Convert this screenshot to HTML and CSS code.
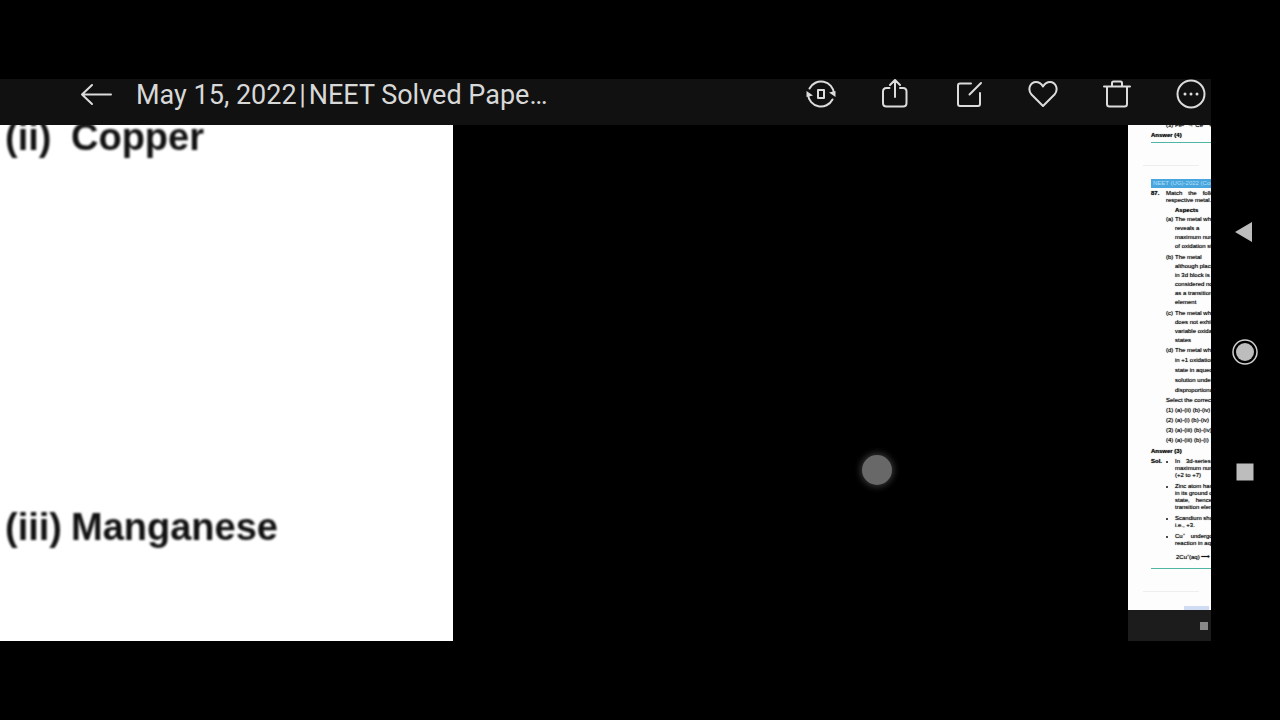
FILE: index.html
```
<!doctype html>
<html lang="en">
<head>
    <meta charset="utf-8">
    <title>May 15, 2022 | NEET Solved Paper</title>
    <link rel="stylesheet" href="styles.css">
</head>
<body>
    <main class="app">
        <header class="toolbar">
            <button class="icon-btn back" aria-label="Back">
                <svg width="32" height="30" viewBox="0 0 32 30"><path d="M12 6L2 15.500L12 25M2 15.500H31"/></svg>
            </button>
            <h1 class="title">May 15, 2022&#8202;|&#8202;NEET Solved Pape…</h1>
            <div class="actions">
                <button class="icon-btn" aria-label="Rotate">
                    <svg width="30" height="30" viewBox="0 0 30 30">
                        <path d="M3.500 9.500A13 13 0 0 1 28 14.500M26.500 20.500A13 13 0 0 1 2 15.500"/>
                        <path class="solid" d="M23 13.500L29.500 12V18zM7 16.500L.5 18V12z"/>
                        <rect x="12" y="11" width="6" height="8"/>
                    </svg>
                </button>
                <button class="icon-btn" aria-label="Share">
                    <svg width="30" height="30" viewBox="0 0 30 30"><path d="M9.500 9H6.500Q3 9 3 12.500V24Q3 27.500 6.500 27.500H23Q26.500 27.500 26.500 24V12.500Q26.500 9 23 9H20M15 18V1.500M10 6L15 1L20 6"/></svg>
                </button>
                <button class="icon-btn" aria-label="Edit">
                    <svg width="30" height="30" viewBox="0 0 30 30"><path d="M17 4.500H6Q4 4.500 4 6.500V25Q4 27 6 27H24Q26 27 26 25V14M15.500 15.500L27 4"/></svg>
                </button>
                <button class="icon-btn" aria-label="Favourite">
                    <svg width="30" height="30" viewBox="0 0 30 30"><path d="M15 27L3.500 15.500C-1 10 2.500 3 8 3C11.500 3 13.500 5 15 7.500C16.500 5 18.500 3 22 3C27.500 3 31 10 26.500 15.500Z"/></svg>
                </button>
                <button class="icon-btn" aria-label="Delete">
                    <svg width="30" height="30" viewBox="0 0 30 30"><path d="M2 7.500H28M10 7V4Q10 2.500 11.500 2.500H18.500Q20 2.500 20 4V7M5 8V25Q5 27.500 7.500 27.500H22.500Q25 27.500 25 25V8"/></svg>
                </button>
                <button class="icon-btn" aria-label="More">
                    <svg width="30" height="30" viewBox="0 0 30 30">
                        <circle cx="15" cy="15" r="13.500"/>
                        <path class="dots" d="M9 15h.01M15 15h.01M21 15h.01"/>
                    </svg>
                </button>
            </div>
        </header>

        <div class="viewer">
            <!-- zoomed page -->
            <section class="page">
                <dl class="metals">
                    <dt>(ii)</dt><dd>Copper</dd>
                    <dt>(iii)</dt><dd>Manganese</dd>
                </dl>
            </section>

            <!-- full page preview -->
            <aside class="side">
                <div class="sheet">
                    <p class="prev">(3) Fe²⁺ → Ce⁴⁺ + e⁻</p>
                    <p class="answer">Answer (4)</p>
                    <hr class="rule">
                    <hr class="fold">
                    <div class="banner">NEET (UG)-2022 (Code-Q1)</div>
                    <div class="row">
                        <b>87.</b>
                        <div>
                            <p class="wide"><span>Match</span><span>the</span><span>following</span></p>
                            <p>respective metal.</p>
                        </div>
                    </div>
                    <h2 class="aspects">Aspects</h2>
                    <ol class="list">
                        <li><span>(a)</span><p>The metal which<br>reveals a<br>maximum number<br>of oxidation states</p></li>
                        <li><span>(b)</span><p>The metal<br>although placed<br>in 3d block is<br>considered not<br>as a transition<br>element</p></li>
                        <li><span>(c)</span><p>The metal which<br>does not exhibit<br>variable oxidation<br>states</p></li>
                        <li class="loose"><span>(d)</span><p>The metal which<br>in +1 oxidation<br>state in aqueous<br>solution undergoes<br>disproportionation</p></li>
                    </ol>
                    <div class="options">
                        <p>Select the correct option</p>
                        <p>(1) (a)-(ii) (b)-(iv)</p>
                        <p>(2) (a)-(i) (b)-(iv)</p>
                        <p>(3) (a)-(iii) (b)-(iv)</p>
                        <p>(4) (a)-(iii) (b)-(i)</p>
                    </div>
                    <p class="answer">Answer (3)</p>
                    <div class="sol">
                        <b>Sol.</b>
                        <ul>
                            <li><p class="wide"><span>In</span><span>3d-series</span></p><p>maximum number</p><p>(+2 to +7)</p></li>
                            <li><p>Zinc atom has</p><p>in its ground or</p><p class="wide"><span>state,</span><span>hence</span></p><p>transition element</p></li>
                            <li><p>Scandium shows</p><p>i.e., +3.</p></li>
                            <li><p class="wide"><span>Cu⁺</span><span>undergoes</span></p><p>reaction in aqueous</p></li>
                        </ul>
                    </div>
                    <p class="equation">2Cu⁺(aq) ⟶</p>
                    <hr class="rule">
                    <hr class="fold">
                    <div class="link-bar"></div>
                </div>
                <div class="side-foot"><i></i></div>
            </aside>
            <span class="touch"></span>
        </div>
    </main>

    <nav class="sysnav">
        <button aria-label="System back"><svg width="26" height="26" viewBox="0 0 26 26"><path d="M3 13L20 3V23z"/></svg></button>
        <button aria-label="Home"><svg width="26" height="26" viewBox="0 0 26 26"><circle cx="13" cy="13" r="9"/><circle class="ring" cx="13" cy="13" r="12"/></svg></button>
        <button aria-label="Recent apps"><svg width="26" height="26" viewBox="0 0 26 26"><rect x="4.500" y="4.500" width="17" height="17"/></svg></button>
    </nav>
</body>
</html>
```
FILE: styles.css
```
* {
    margin: 0;
    padding: 0;
    box-sizing: border-box;
}

body {
    display: flex;
    height: 100vh;
    background: #000;
    overflow: hidden;
    font-family: "Liberation Sans", Arial, sans-serif;
}

button {
    border: 0;
    background: none;
    cursor: pointer;
}

ul, ol {
    list-style: none;
}

.app {
    flex: 1;
    min-width: 0;
    display: flex;
    flex-direction: column;
    padding: 79px 0;
}

/* toolbar */
.toolbar {
    display: flex;
    align-items: center;
    height: 46px;
    padding: 0 5px 16px 80px;
    background: #111;
    color: #d8d8d8;
}

.title {
    margin-left: 24px;
    font: 400 27px/32px Roboto, sans-serif;
    padding-top: 2px;
    white-space: nowrap;
}

.actions {
    display: flex;
    gap: 44px;
    margin-left: auto;
}

.icon-btn svg {
    display: block;
    fill: none;
    stroke: #dcdcdc;
    stroke-width: 2;
    stroke-linecap: round;
    stroke-linejoin: round;
}

.icon-btn .solid {
    fill: #dcdcdc;
    stroke: none;
}

.icon-btn .dots {
    stroke-width: 3;
}

/* viewer */
.viewer {
    position: relative;
    flex: 1;
    min-height: 0;
    display: grid;
    grid-template-columns: 453px 1fr 83px;
    overflow: hidden;
}

.page {
    background: #fff;
    overflow: hidden;
}

.metals {
    display: grid;
    grid-template-columns: 66px 1fr;
    row-gap: 350px;
    margin-top: -8px;
    padding-left: 5px;
    font-size: 38px;
    font-weight: bold;
    line-height: 40px;
    color: #111;
    filter: blur(1px);
}

.side {
    grid-column: 3;
    display: flex;
    flex-direction: column;
    min-height: 0;
    overflow: hidden;
    background: #1c1c1c;
}

.sheet {
    height: 485px;
    padding-left: 23px;
    overflow: hidden;
    background: #fdfdfd;
    color: #111;
    font-size: 6px;
    line-height: 7px;
    white-space: nowrap;
    text-shadow: 0 0 1px #333;
}

.prev {
    margin-top: -3px;
    padding-left: 15px;
}

.answer {
    font-weight: bold;
    line-height: 10px;
    padding-top: 1px;
}

.rule {
    height: 1px;
    border: 0;
    margin-top: 2px;
    background: #4fb5a5;
}

.fold {
    height: 1px;
    border: 0;
    margin: 22px 12px 0 -8px;
    background: #eee;
}

.banner {
    height: 9px;
    margin: 13px 0 2px;
    padding-left: 2px;
    overflow: hidden;
    background: #48a5dd;
    color: #b5e0fa;
    line-height: 9px;
    text-shadow: none;
}

.row {
    display: grid;
    grid-template-columns: 15px 1fr;
}

.wide {
    display: flex;
    gap: 6px;
}

.aspects {
    padding: 1px 0 0 24px;
    font-size: 6px;
    line-height: 10px;
}

.list {
    padding-left: 15px;
    line-height: 9px;
}

.list li {
    display: grid;
    grid-template-columns: 9px 1fr;
    padding-bottom: 2px;
}

.list .loose {
    margin-top: -2px;
    padding-bottom: 0;
    line-height: 10px;
}

.options {
    padding-left: 15px;
    line-height: 10px;
}

.sol {
    display: grid;
    grid-template-columns: 15px 1fr;
    padding-top: 2px;
}

.sol li {
    position: relative;
    padding: 0 0 4px 9px;
}

.sol li::before {
    content: "";
    position: absolute;
    left: 0;
    top: 3px;
    width: 2px;
    height: 2px;
    border-radius: 50%;
    background: #111;
}

.equation {
    padding: 3px 0 5px 25px;
}

.link-bar {
    height: 4px;
    margin: 14px 2px 0 33px;
    background: #cfdcf3;
}

.side-foot {
    flex: 1;
    display: flex;
    align-items: center;
    justify-content: flex-end;
    padding-right: 3px;
}

.side-foot i {
    width: 8px;
    height: 8px;
    background: #888;
}

/* finger position */
.touch {
    position: absolute;
    left: 862px;
    top: 330px;
    width: 30px;
    height: 30px;
    border-radius: 50%;
    background: #686868;
    box-shadow: 0 0 6px 2px #333;
}

/* system navigation */
.sysnav {
    width: 69px;
    display: flex;
    flex-direction: column;
    align-items: center;
    justify-content: center;
    gap: 94px;
    padding: 0 1px 16px 0;
}

.sysnav svg {
    display: block;
    fill: #bdbdbd;
}

.sysnav .ring {
    fill: none;
    stroke: #d0d0d0;
    stroke-width: 1.5;
}
```
